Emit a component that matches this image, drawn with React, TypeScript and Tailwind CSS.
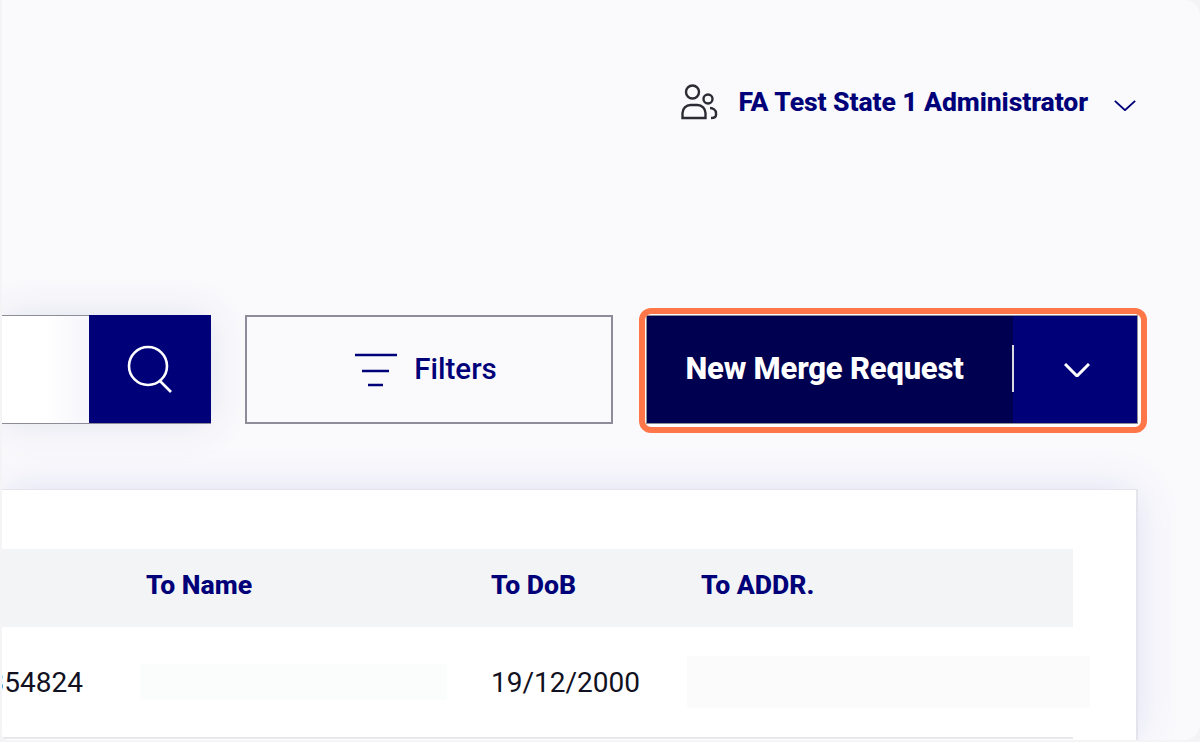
import React from 'react'

const font = "font-['Roboto',sans-serif]"

const UsersIcon = () => (
  <svg width="38" height="40" viewBox="0 0 38 40" fill="none" stroke="#2b2b33" strokeWidth="2.4">
    <circle cx="11.5" cy="10" r="6.5" />
    <circle cx="27" cy="17" r="4.5" />
    <path d="M1.5 36v-5a8 8 0 0 1 8-8h7a8 8 0 0 1 8 8v5z" />
    <path d="M29 26c3 0 6 2 6 5v2c0 2-2 3-5 3" />
  </svg>
)

const SearchIcon = () => (
  <svg width="48" height="48" viewBox="0 0 48 48" fill="none" stroke="#ffffff" strokeWidth="2.6">
    <circle cx="22" cy="21" r="19" />
    <path d="M34 36l11 11" />
  </svg>
)

const FilterIcon = () => (
  <svg width="44" height="34" viewBox="0 0 44 34" fill="none" stroke="#000078" strokeWidth="2.4">
    <path d="M1 2h42M8 18h27M14 32h15" />
  </svg>
)

const Chevron = ({ width, height, color, stroke }: { width: number; height: number; color: string; stroke: number }) => (
  <svg width={width} height={height} viewBox="0 0 26 14" fill="none" stroke={color} strokeWidth={stroke} preserveAspectRatio="none">
    <path d="M1 1l12 12L25 1" />
  </svg>
)

const App = () => {
  return (
    <div className={`w-[1200px] h-[742px] bg-[#f4f4f7] overflow-hidden ${font}`}>
      <div className="ml-[2px] h-[740px] pt-[1px] rounded-r-[16px] rounded-bl-[6px] bg-[#fafafd] flex flex-col overflow-hidden">
        {/* Top bar */}
        <div className="h-[314px] pt-[79px] pr-[64px] flex justify-end items-start">
          <div className="flex items-center h-[44px]">
            <UsersIcon />
            <span className="ml-[20px] text-[26.6px] font-extrabold leading-none text-[#000078] tracking-[-0.1px]">FA Test State 1 Administrator</span>
            <span className="ml-[26px] mt-[6px]"><Chevron width={22} height={11} color="#000078" stroke={2.2} /></span>
          </div>
        </div>

        {/* Toolbar */}
        <div className="flex items-stretch h-[109px]">
          <div className="flex w-[211px] -ml-[2px] border-b border-[#8d8d99] shadow-[0_0_40px_rgba(40,40,120,0.12)]">
            <div className="w-[89px] bg-linear-to-r from-white from-50% to-[#f6f6fb] border-t border-[#8d8d99]" />
            <button className="w-[122px] bg-[#000078] flex items-center justify-center">
              <SearchIcon />
            </button>
          </div>
          <button className="ml-[34px] w-[368px] pr-[7px] border-2 border-[#8d8d99] flex items-center justify-center gap-[16px] text-[#000078] text-[29.5px] font-medium">
            <FilterIcon />
            <span>Filters</span>
          </button>
          <div className="relative ml-[33px] w-[492px] flex border border-[#8d8d99] shadow-[3px_3px_0_#ffffff]">
            <button className="w-[366px] pr-[11px] bg-[#000050] text-white text-[31px] font-extrabold tracking-[-0.2px] flex items-center justify-center">
              New Merge Request
            </button>
            <div className="w-[2px] h-[47px] bg-[#d8d8e0] -ml-[1px] mt-[29px] -mr-[1px] relative" />
            <button className="flex-1 pl-[4px] bg-[#000078] flex items-center justify-center">
              <Chevron width={26} height={14} color="#ffffff" stroke={3} />
            </button>
            {/* highlight ring */}
            <div className="absolute -left-[8px] -top-[8px] -right-[10px] -bottom-[10px] border-[6px] border-[#ff7648] rounded-[12px]" />
          </div>
        </div>

        {/* Table card */}
        <div className="mt-[65px] w-[1136px] flex-1 bg-white border-t border-r-2 border-[#e4e4ec] pt-[59px] shadow-[0_0_40px_rgba(50,50,160,0.13)]">
          <div className="w-[1071px] h-[78px] pb-[6px] bg-[#f3f4f6] flex items-center text-[#000078] text-[26.6px] font-extrabold">
            <span className="ml-[144px] w-[345px]">To Name</span>
            <span className="w-[210px]">To DoB</span>
            <span>To ADDR.</span>
          </div>
          <div className="flex items-center h-[110px] text-[28px] text-[#111122]">
            <div className="w-[81px] shrink-0 mt-[1px] overflow-hidden flex justify-end">
              <span>354824</span>
            </div>
            <div className="ml-[57px] w-[307px] h-[36px] shrink-0 bg-[#fbfcfc]" />
            <span className="ml-[44px] w-[196px] shrink-0 mt-[1px]">19/12/2000</span>
            <div className="w-[403px] h-[52px] shrink-0 bg-[#fbfbfc]" />
          </div>
          <div className="w-[1071px] h-[2px] bg-[#e8e8ec]" />
        </div>
      </div>
    </div>
  )
}

export default App
